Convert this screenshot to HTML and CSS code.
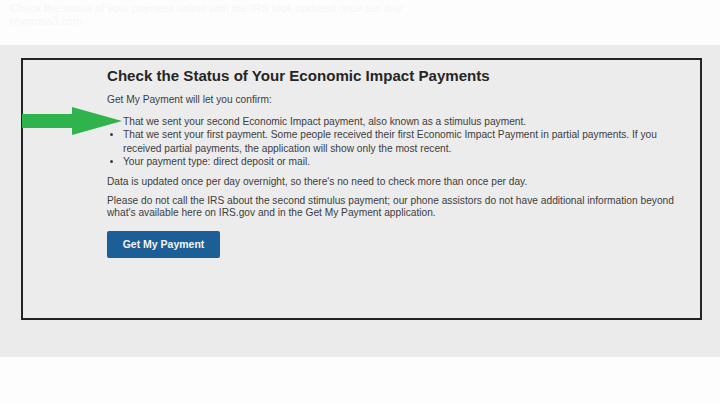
FILE: index.html
```html
<!DOCTYPE html>
<html lang="en">

<head>
    <meta charset="UTF-8">
    <meta name="viewport" content="width=device-width, initial-scale=1.0">
    <link rel="stylesheet" href="styles.css">
    <title>Get My Payment</title>
</head>

<body>
    <div class="caption">
        <p class="capLine">Check the status of your payment online with the IRS tool, updated once per day</p>
        <p class="capLine">ntyprosa3.com</p>
    </div>

    <div class="panel">
        <div class="box">
            <!-- green pointer over the first bullet -->
            <svg class="arrow" width="100" height="28" viewBox="0 0 100 28">
                <polygon points="0,7 50,7 50,0 100,14 50,28 50,21 0,21" fill="#2fb34c" />
            </svg>

            <div class="content">
                <h1 class="title">Check the Status of Your Economic Impact Payments</h1>
                <p class="text intro">Get My Payment will let you confirm:</p>
                <ul class="list">
                    <li>That we sent your second Economic Impact payment, also known as a stimulus payment.</li>
                    <li>That we sent your first payment. Some people received their first Economic Impact Payment in partial payments. If you received partial payments, the application will show only the most recent.</li>
                    <li>Your payment type: direct deposit or mail.</li>
                </ul>
                <p class="text">Data is updated once per day overnight, so there's no need to check more than once per day.</p>
                <p class="text">Please do not call the IRS about the second stimulus payment; our phone assistors do not have additional information beyond what's available here on IRS.gov and in the Get My Payment application.</p>
                <a class="btnPay" href="#">Get My Payment</a>
            </div>
        </div>
    </div>
</body>

</html>
```

FILE: styles.css
```css
body {
    margin: 0;
    background-color: #fdfdfd;
    font-family: "Liberation Sans", Arial, sans-serif;
    color: #3d3d3d;
}

.caption {
    height: 45px;
    padding: 2px 8px 0 10px;
    box-sizing: border-box;
}

.capLine {
    margin: 0;
    font-size: 11px;
    line-height: 13px;
    color: #f6f6f6;
}

.panel {
    background-color: #ebebeb;
    height: 312px;
    padding: 13px 18px 0 21px;
    box-sizing: border-box;
}

.box {
    position: relative;
    height: 262px;
    border: 2px solid #232323;
    box-sizing: border-box;
    background-color: #ececec;
    padding: 6px 14px 0 84px;
}

.arrow {
    position: absolute;
    left: -1px;
    top: 47px;
}

.title {
    margin: 0 0 8px 0;
    font-size: 15.1px;
    line-height: 20px;
    font-weight: bold;
    color: #262626;
}

.text {
    margin: 0 0 6.5px 0;
    font-size: 10.2px;
    line-height: 12.5px;
}

.intro {
    margin-bottom: 8px;
}

.list {
    margin: 0 0 7px 0;
    padding-left: 16px;
    font-size: 10.2px;
    line-height: 13.5px;
}

.btnPay {
    display: inline-block;
    margin-top: 5px;
    width: 113px;
    height: 27px;
    line-height: 27px;
    text-align: center;
    background-color: #1c5f97;
    border-radius: 2px;
    color: #f4f4f4;
    font-weight: bold;
    font-size: 10.5px;
    text-decoration: none;
}
```
